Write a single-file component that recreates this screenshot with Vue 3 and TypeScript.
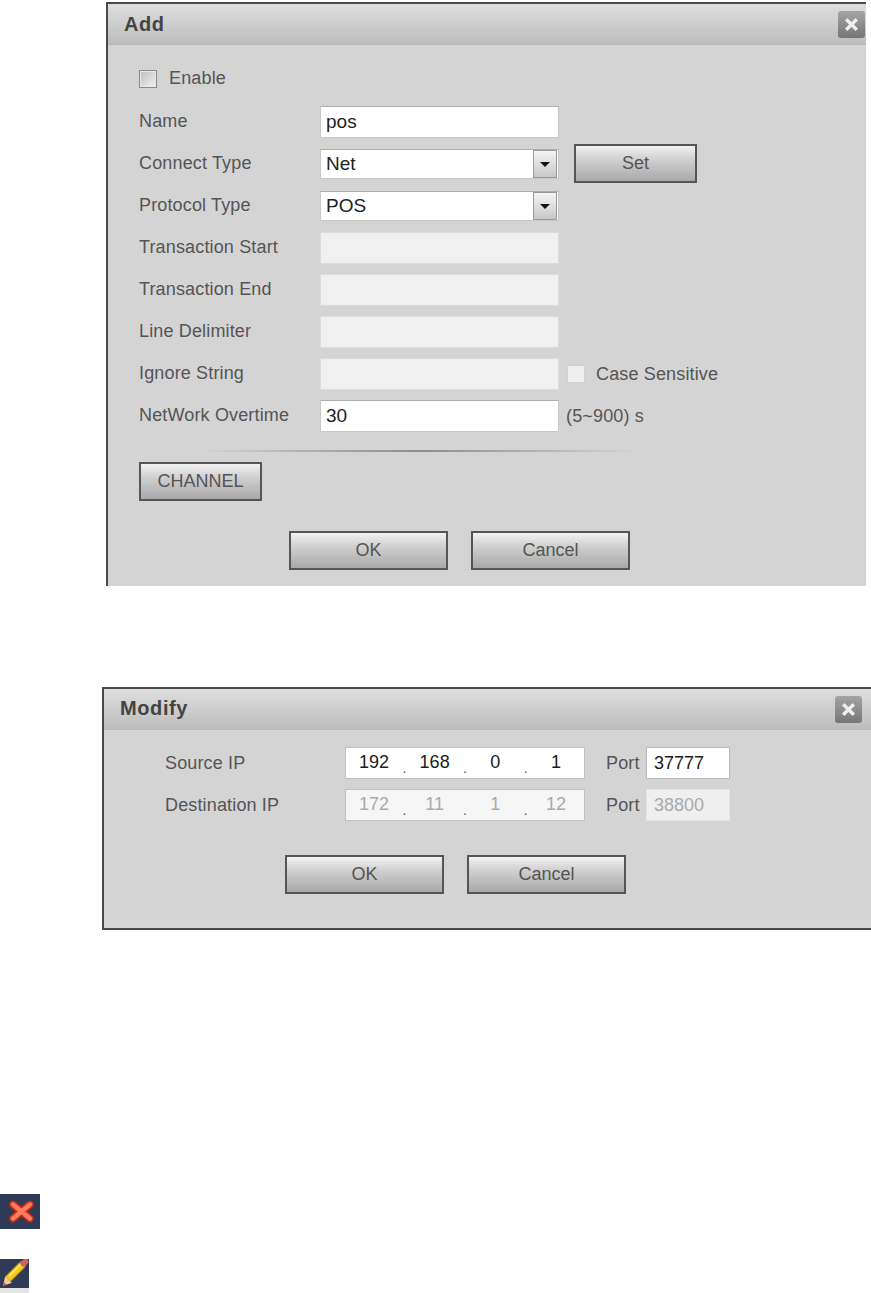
<template>
  <div class="page">
    <section class="dlg dlg--add">
      <header class="dlg__head">
        <h2 class="dlg__title">Add</h2>
        <button type="button" class="dlg__close" aria-label="Close">
          <svg width="17" height="17" viewBox="0 0 16 16"><path d="M3 3l10 10M13 3L3 13" stroke="#eee" stroke-width="3.2" /></svg>
        </button>
      </header>
      <div class="add-body">
        <label class="enable"><span class="check" /><span>Enable</span></label>

        <div v-for="row in addRows" :key="row.label" class="row">
          <span class="row__label">{{ row.label }}</span>
          <div class="field" :class="{ 'field--off': row.off, 'field--select': row.select }">
            <span class="field__text">{{ row.value }}</span>
            <span v-if="row.select" class="field__drop"><i class="caret" /></span>
          </div>
          <button v-if="row.label === 'Connect Type'" type="button" class="btn btn--set">Set</button>
          <label v-if="row.label === 'Ignore String'" class="case"><span class="check check--off" /><span>Case Sensitive</span></label>
          <span v-if="row.label === 'NetWork Overtime'" class="hint">(5~900) s</span>
        </div>

        <div class="rule" />
        <button type="button" class="btn btn--channel">CHANNEL</button>
        <div class="actions">
          <button type="button" class="btn btn--wide">OK</button>
          <button type="button" class="btn btn--wide">Cancel</button>
        </div>
      </div>
    </section>

    <section class="dlg dlg--modify">
      <header class="dlg__head">
        <h2 class="dlg__title">Modify</h2>
        <button type="button" class="dlg__close" aria-label="Close">
          <svg width="17" height="17" viewBox="0 0 16 16"><path d="M3 3l10 10M13 3L3 13" stroke="#eee" stroke-width="3.2" /></svg>
        </button>
      </header>
      <div class="mod-body">
        <div v-for="row in ipRows" :key="row.label" class="ip-row" :class="{ 'ip-row--off': row.off }">
          <span class="ip-row__label">{{ row.label }}</span>
          <div class="ip">
            <template v-for="(part, i) in row.ip" :key="i">
              <span class="ip__part">{{ part }}</span>
              <span v-if="i < 3" class="ip__dot">.</span>
            </template>
          </div>
          <span class="ip-row__port">Port</span>
          <div class="port">{{ row.port }}</div>
        </div>
        <div class="actions actions--mod">
          <button type="button" class="btn btn--wide">OK</button>
          <button type="button" class="btn btn--wide">Cancel</button>
        </div>
      </div>
    </section>

    <div class="icon icon--del">
      <svg width="40" height="35" viewBox="0 0 40 35">
        <path d="M13 10.5l17 14M30 10.5L13 24.5" stroke="#c92f14" stroke-width="7.5" stroke-linecap="round" />
        <path d="M13 10.5l17 14M30 10.5L13 24.5" stroke="#ff7d5e" stroke-width="4.4" stroke-linecap="round" />
      </svg>
    </div>
    <div class="icon icon--edit">
      <svg width="29" height="29" viewBox="0 0 29 29">
        <path d="M8 20L22 6" stroke="#a98a10" stroke-width="8" />
        <path d="M8 20L22 6" stroke="#f3cc1c" stroke-width="6" />
        <path d="M9 17L21 5" stroke="#ffe97a" stroke-width="1.4" />
        <path d="M22 6l1.6-1.6" stroke="#9a9aa6" stroke-width="7" />
        <path d="M23.5 4.5L25.5 2.5" stroke="#d8615c" stroke-width="6" stroke-linecap="round" />
        <path d="M5.2 17.2l6.6 6.6L3 27z" fill="#f4c8a0" />
        <path d="M3 27l1.2-3.6 2.4 2.4z" fill="#d8501c" />
      </svg>
    </div>
  </div>
</template>

<script setup lang="ts">
interface AddRow {
  label: string;
  value: string;
  off?: boolean;
  select?: boolean;
}

const addRows: AddRow[] = [
  { label: 'Name', value: 'pos' },
  { label: 'Connect Type', value: 'Net', select: true },
  { label: 'Protocol Type', value: 'POS', select: true },
  { label: 'Transaction Start', value: '', off: true },
  { label: 'Transaction End', value: '', off: true },
  { label: 'Line Delimiter', value: '', off: true },
  { label: 'Ignore String', value: '', off: true },
  { label: 'NetWork Overtime', value: '30' },
];

const ipRows = [
  { label: 'Source IP', ip: ['192', '168', '0', '1'], port: '37777', off: false },
  { label: 'Destination IP', ip: ['172', '11', '1', '12'], port: '38800', off: true },
];
</script>

<style scoped>
.page {
  width: 871px;
  height: 1293px;
  overflow: hidden;
  background: #fff;
  padding-top: 2px;
  box-sizing: border-box;
  font-family: 'Liberation Sans', Arial, sans-serif;
  font-size: 18px;
  letter-spacing: 0.15px;
  color: #555;
}
.dlg {
  box-sizing: border-box;
  background: #d4d4d4;
  border: 2px solid #4a4a4a;
}
.dlg--add {
  width: 760px;
  height: 584px;
  margin-left: 106px;
  border-right: 0;
  border-bottom: 0;
}
.dlg--modify {
  width: 769px;
  height: 243px;
  margin-left: 102px;
  margin-top: 101px;
  border-right: 0;
}
.dlg__head {
  height: 40px;
  display: flex;
  align-items: center;
  justify-content: space-between;
  padding: 0 1px 0 16px;
  background: linear-gradient(#dedede, #bdbdbd);
  border-bottom: 1px solid #b8b8b8;
}
.dlg--modify .dlg__head {
  padding-right: 9px;
}
.dlg--modify .dlg__title {
  margin-top: -2px;
}
.dlg__title {
  margin: 0;
  font-size: 20px;
  font-weight: 700;
  letter-spacing: 0.6px;
  color: #444;
}
.dlg__close {
  width: 27px;
  height: 27px;
  padding: 0;
  border: 0;
  border-radius: 3px;
  background: linear-gradient(#a4a4a4, #767676);
  display: flex;
  align-items: center;
  justify-content: center;
}
.add-body {
  padding: 22px 0 0 31px;
}
.enable {
  display: flex;
  align-items: center;
  gap: 12px;
  height: 24px;
  margin-bottom: 15px;
}
.enable span:last-child {
  margin-top: -2px;
}
.check {
  width: 18px;
  height: 18px;
  box-sizing: border-box;
  border: 1px solid #8a8a8a;
  background: linear-gradient(135deg, #bdbdbd, #f2f2f2);
  box-shadow: inset 0 0 0 1px #e8e8e8;
}
.check--off {
  border: 1px solid #d0d0d0;
  background: #efefef;
  box-shadow: none;
}
.row {
  display: flex;
  align-items: center;
  height: 32px;
  margin-bottom: 10px;
}
.row__label {
  width: 181px;
  margin-top: -2px;
}
.field {
  box-sizing: border-box;
  width: 239px;
  height: 32px;
  display: flex;
  align-items: center;
  background: #fff;
  border: 1px solid #c8c8c8;
  border-top-color: #aeaeae;
  color: #222;
  font-size: 19px;
  letter-spacing: 0;
  padding-left: 5px;
}
.field--select {
  height: 30px;
}
.field--off {
  background: #f0f0f0;
  border-color: #dcdcdc;
}
.field__text {
  flex: 1;
}
.field__drop {
  width: 24px;
  height: 28px;
  margin-right: 1px;
  box-sizing: border-box;
  border: 1px solid #999;
  background: linear-gradient(#f4f4f4, #c8c8c8);
  display: flex;
  align-items: center;
  justify-content: center;
}
.caret {
  width: 0;
  height: 0;
  border: 5px solid transparent;
  border-top: 5px solid #111;
  border-bottom: 0;
}
.btn {
  box-sizing: border-box;
  height: 39px;
  border: 2px solid #555;
  border-radius: 0;
  padding: 0;
  background: linear-gradient(#f2f2f2, #d2d2d2 35%, #aaa8a8);
  font-family: inherit;
  font-size: 18px;
  color: #555;
}
.btn--set {
  width: 123px;
  margin-left: 15px;
  margin-top: -2px;
}
.btn--channel {
  display: block;
  width: 123px;
}
.btn--wide {
  width: 159px;
}
.case {
  display: flex;
  align-items: center;
  gap: 11px;
  margin-left: 8px;
}
.hint {
  margin-left: 7px;
}
.rule {
  width: 440px;
  height: 2px;
  margin: 18px 0 10px 60px;
  background: linear-gradient(90deg, #d4d4d4, #8c8c8c 50%, #d4d4d4);
}
.actions {
  display: flex;
  gap: 23px;
  margin: 30px 0 0 150px;
}
.mod-body {
  padding: 17px 0 0 61px;
}
.ip-row {
  display: flex;
  align-items: center;
  height: 32px;
  margin-bottom: 10px;
}
.ip-row__label {
  width: 180px;
}
.ip {
  box-sizing: border-box;
  width: 240px;
  height: 32px;
  display: flex;
  align-items: center;
  justify-content: space-between;
  padding: 0 12px 2px;
  background: #fff;
  border: 1px solid #c0c0c0;
  font-size: 18px;
  letter-spacing: 0;
  color: #1c1c1c;
}
.ip__part {
  width: 32px;
  text-align: center;
}
.ip__dot {
  font-size: 14px;
  align-self: flex-end;
  margin-bottom: 0;
  color: #555;
}
.ip-row__port {
  margin-left: 21px;
  width: 40px;
}
.port {
  box-sizing: border-box;
  width: 84px;
  height: 32px;
  padding-left: 7px;
  line-height: 30px;
  background: #fff;
  border: 1px solid #bbb;
  font-size: 18px;
  letter-spacing: 0;
  color: #1c1c1c;
}
.ip-row--off .ip {
  background: #f6f6f6;
  color: #aaa;
}
.ip-row--off .port {
  background: #efefef;
  border-color: #e4e4e4;
  color: #aaa;
}
.actions--mod {
  margin: 34px 0 0 120px;
}
.icon {
  background: #2f3a56;
  display: flex;
}
.icon--del {
  margin-top: 264px;
  width: 40px;
  height: 35px;
}
.icon--edit {
  margin-top: 30px;
  width: 29px;
  height: 29px;
  border-bottom: 5px solid #e4e4e4;
}
</style>
